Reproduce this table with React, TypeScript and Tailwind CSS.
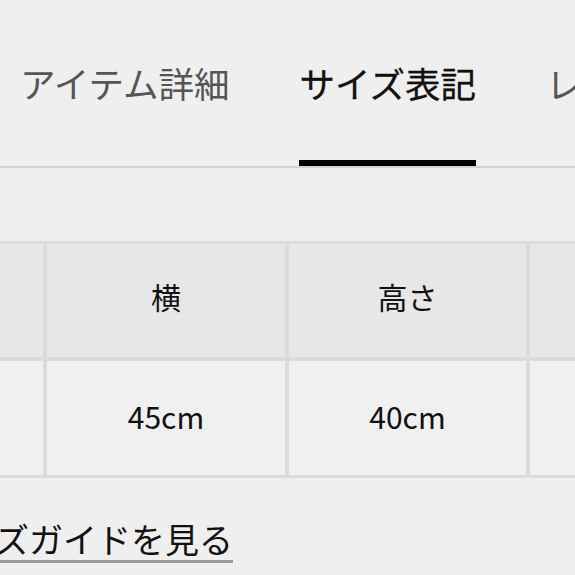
import React from "react";

const font = { fontFamily: '"Noto Sans CJK JP", "Noto Sans", sans-serif' };

const App = () => {
  return (
    <div className="w-[575px] h-[575px] overflow-hidden bg-[#efefef] flex flex-col" style={font}>
      <div className="flex items-start gap-[70px] pl-[20px] pt-[65px] border-b-2 border-[#d2d2d2] whitespace-nowrap">
        <div className="text-[35.5px] leading-none text-[#555] pb-[65px]">アイテム詳細</div>
        <div className="text-[35.5px] leading-none text-[#111] [-webkit-text-stroke:0.3px_#111] pb-[59px] border-b-[6px] border-black -mb-[3px]">
          サイズ表記
        </div>
        <div className="text-[35.5px] leading-none text-[#555]">レビュー</div>
      </div>

      <div className="mt-[73px] grid grid-cols-[43px_238px_237px_1fr] grid-rows-[113px_114px] gap-[4px] bg-[#dbdbdb] border-y-[3px] border-[#dbdbdb]">
        <div className="bg-[#e7e7e7]" />
        <div className="bg-[#e7e7e7] flex items-center justify-center text-[30px] leading-none pb-[8px] text-[#111]">横</div>
        <div className="bg-[#e7e7e7] flex items-center justify-center text-[30px] leading-none pb-[8px] text-[#111]">高さ</div>
        <div className="bg-[#e7e7e7]" />
        <div className="bg-[#f0f0f0]" />
        <div className="bg-[#f0f0f0] flex items-center justify-center text-[30px] leading-none pb-[4px] text-[#111]">45cm</div>
        <div className="bg-[#f0f0f0] flex items-center justify-center text-[30px] leading-none pb-[4px] text-[#111]">40cm</div>
        <div className="bg-[#f0f0f0]" />
      </div>

      <div className="mt-[44px] ml-[-72px] flex whitespace-nowrap">
        <span className="text-[34px] leading-none text-[#111] pb-[4px] border-b-[3px] border-[#999]">
          サイズガイドを見る
        </span>
      </div>
      <div className="mt-[12px] h-[3px] shrink-0 bg-[#222]" />
    </div>
  );
};

export default App;
